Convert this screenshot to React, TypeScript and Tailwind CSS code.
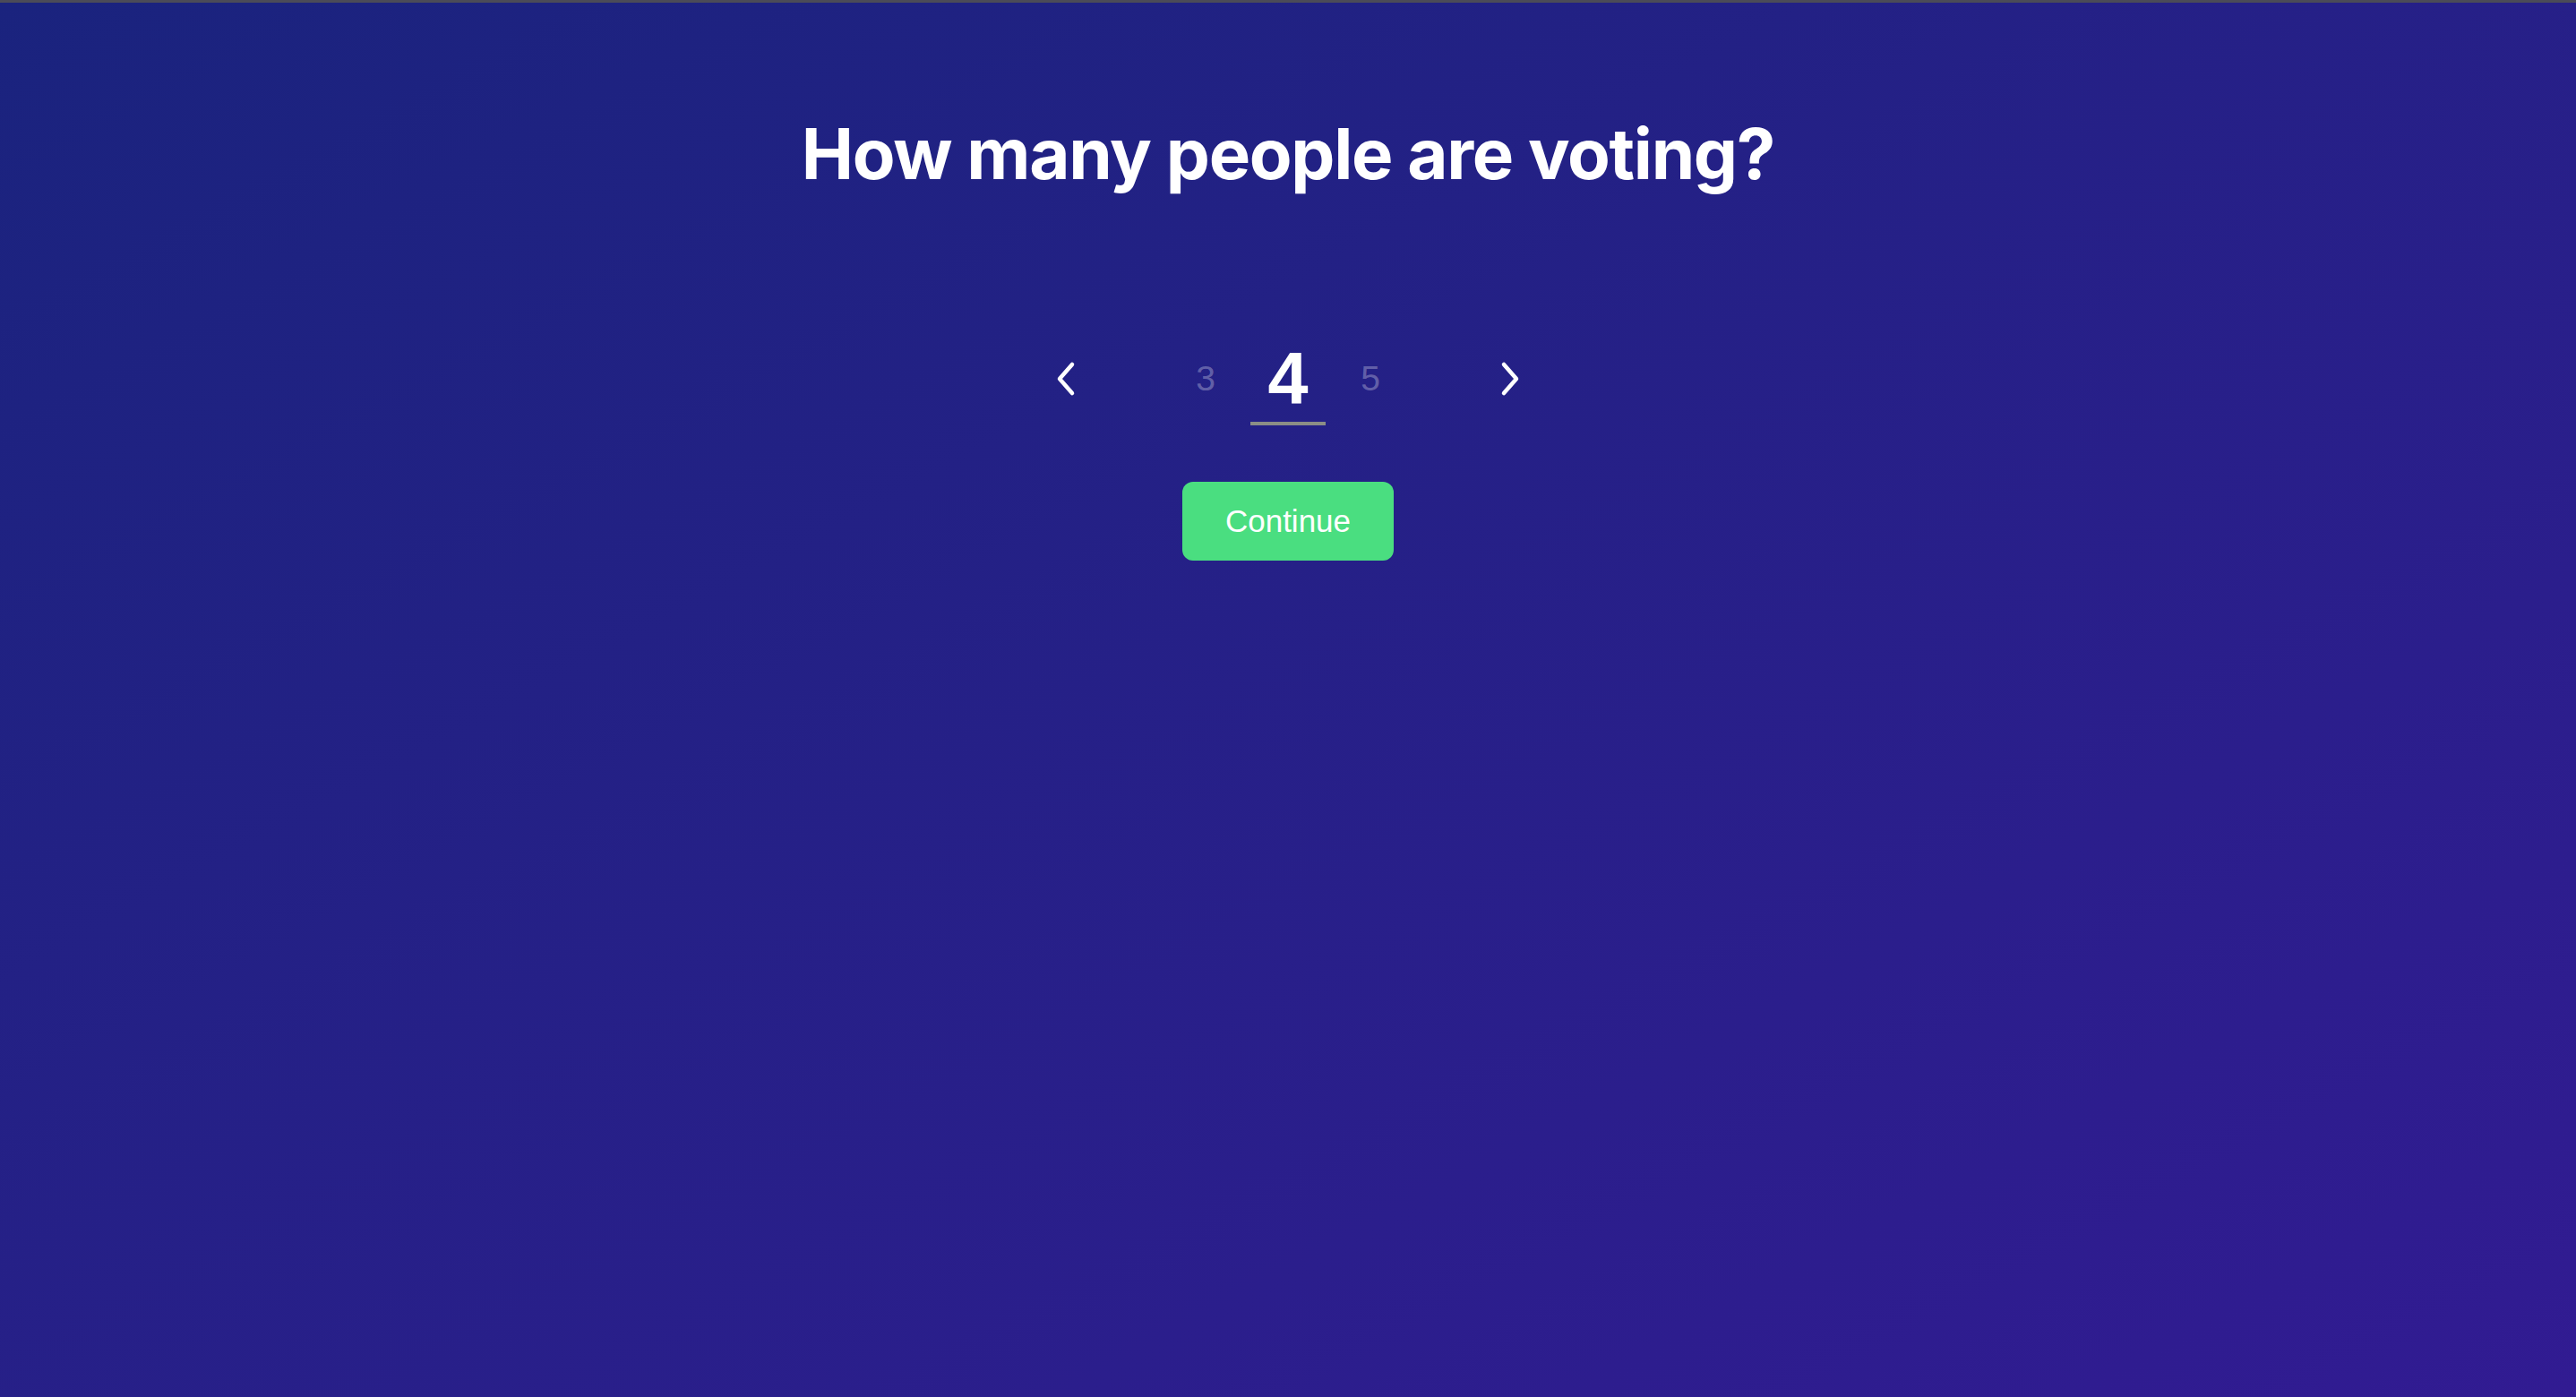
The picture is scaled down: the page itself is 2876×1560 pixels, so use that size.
import { useState } from "react";

function Chevron({ dir }: { dir: "left" | "right" }) {
  return (
    <svg width="24" height="40" viewBox="0 0 24 40" fill="none" className="block">
      <path
        d={dir === "left" ? "M19 4 L5 20 L19 36" : "M5 4 L19 20 L5 36"}
        stroke="white"
        strokeWidth="4.5"
        strokeLinecap="round"
        strokeLinejoin="round"
      />
    </svg>
  );
}

export default function App() {
  const [count, setCount] = useState(4);

  return (
    <div className="min-h-screen flex flex-col bg-linear-to-br from-[#1a237e] to-[#311b92]">
      <div className="h-[3px] bg-[#4b4b58]" />
      <main className="flex flex-col items-center pt-[130px]">
        <h1 className="text-white font-bold text-[78px] leading-none tracking-[-0.017em] font-['Inter','Liberation_Sans',sans-serif]">
          How many people are voting?
        </h1>

        <div className="mt-[171px] flex items-center font-['Liberation_Sans',Arial,sans-serif]">
          <button className="p-0" onClick={() => setCount((c) => Math.max(1, c - 1))}>
            <Chevron dir="left" />
          </button>
          <div className="w-[133px]" />
          <span className="w-[22px] text-center text-[39px] leading-none text-white/30">{count - 1}</span>
          <div className="w-[39px]" />
          <div className="relative w-[84px] flex justify-center">
            <span className="text-[81px] leading-none font-bold text-white">{count}</span>
            <div className="absolute left-0 right-0 -bottom-[12px] h-[4px] bg-[#8b8e86]" />
          </div>
          <div className="w-[39px]" />
          <span className="w-[22px] text-center text-[39px] leading-none text-white/30">{count + 1}</span>
          <div className="w-[133px]" />
          <button className="p-0" onClick={() => setCount((c) => c + 1)}>
            <Chevron dir="right" />
          </button>
        </div>

        <button className="mt-[75px] w-[236px] h-[88px] rounded-[12px] bg-[#4ade80] text-white text-[35px] font-['Liberation_Sans',Arial,sans-serif]">
          Continue
        </button>
      </main>
    </div>
  );
}
